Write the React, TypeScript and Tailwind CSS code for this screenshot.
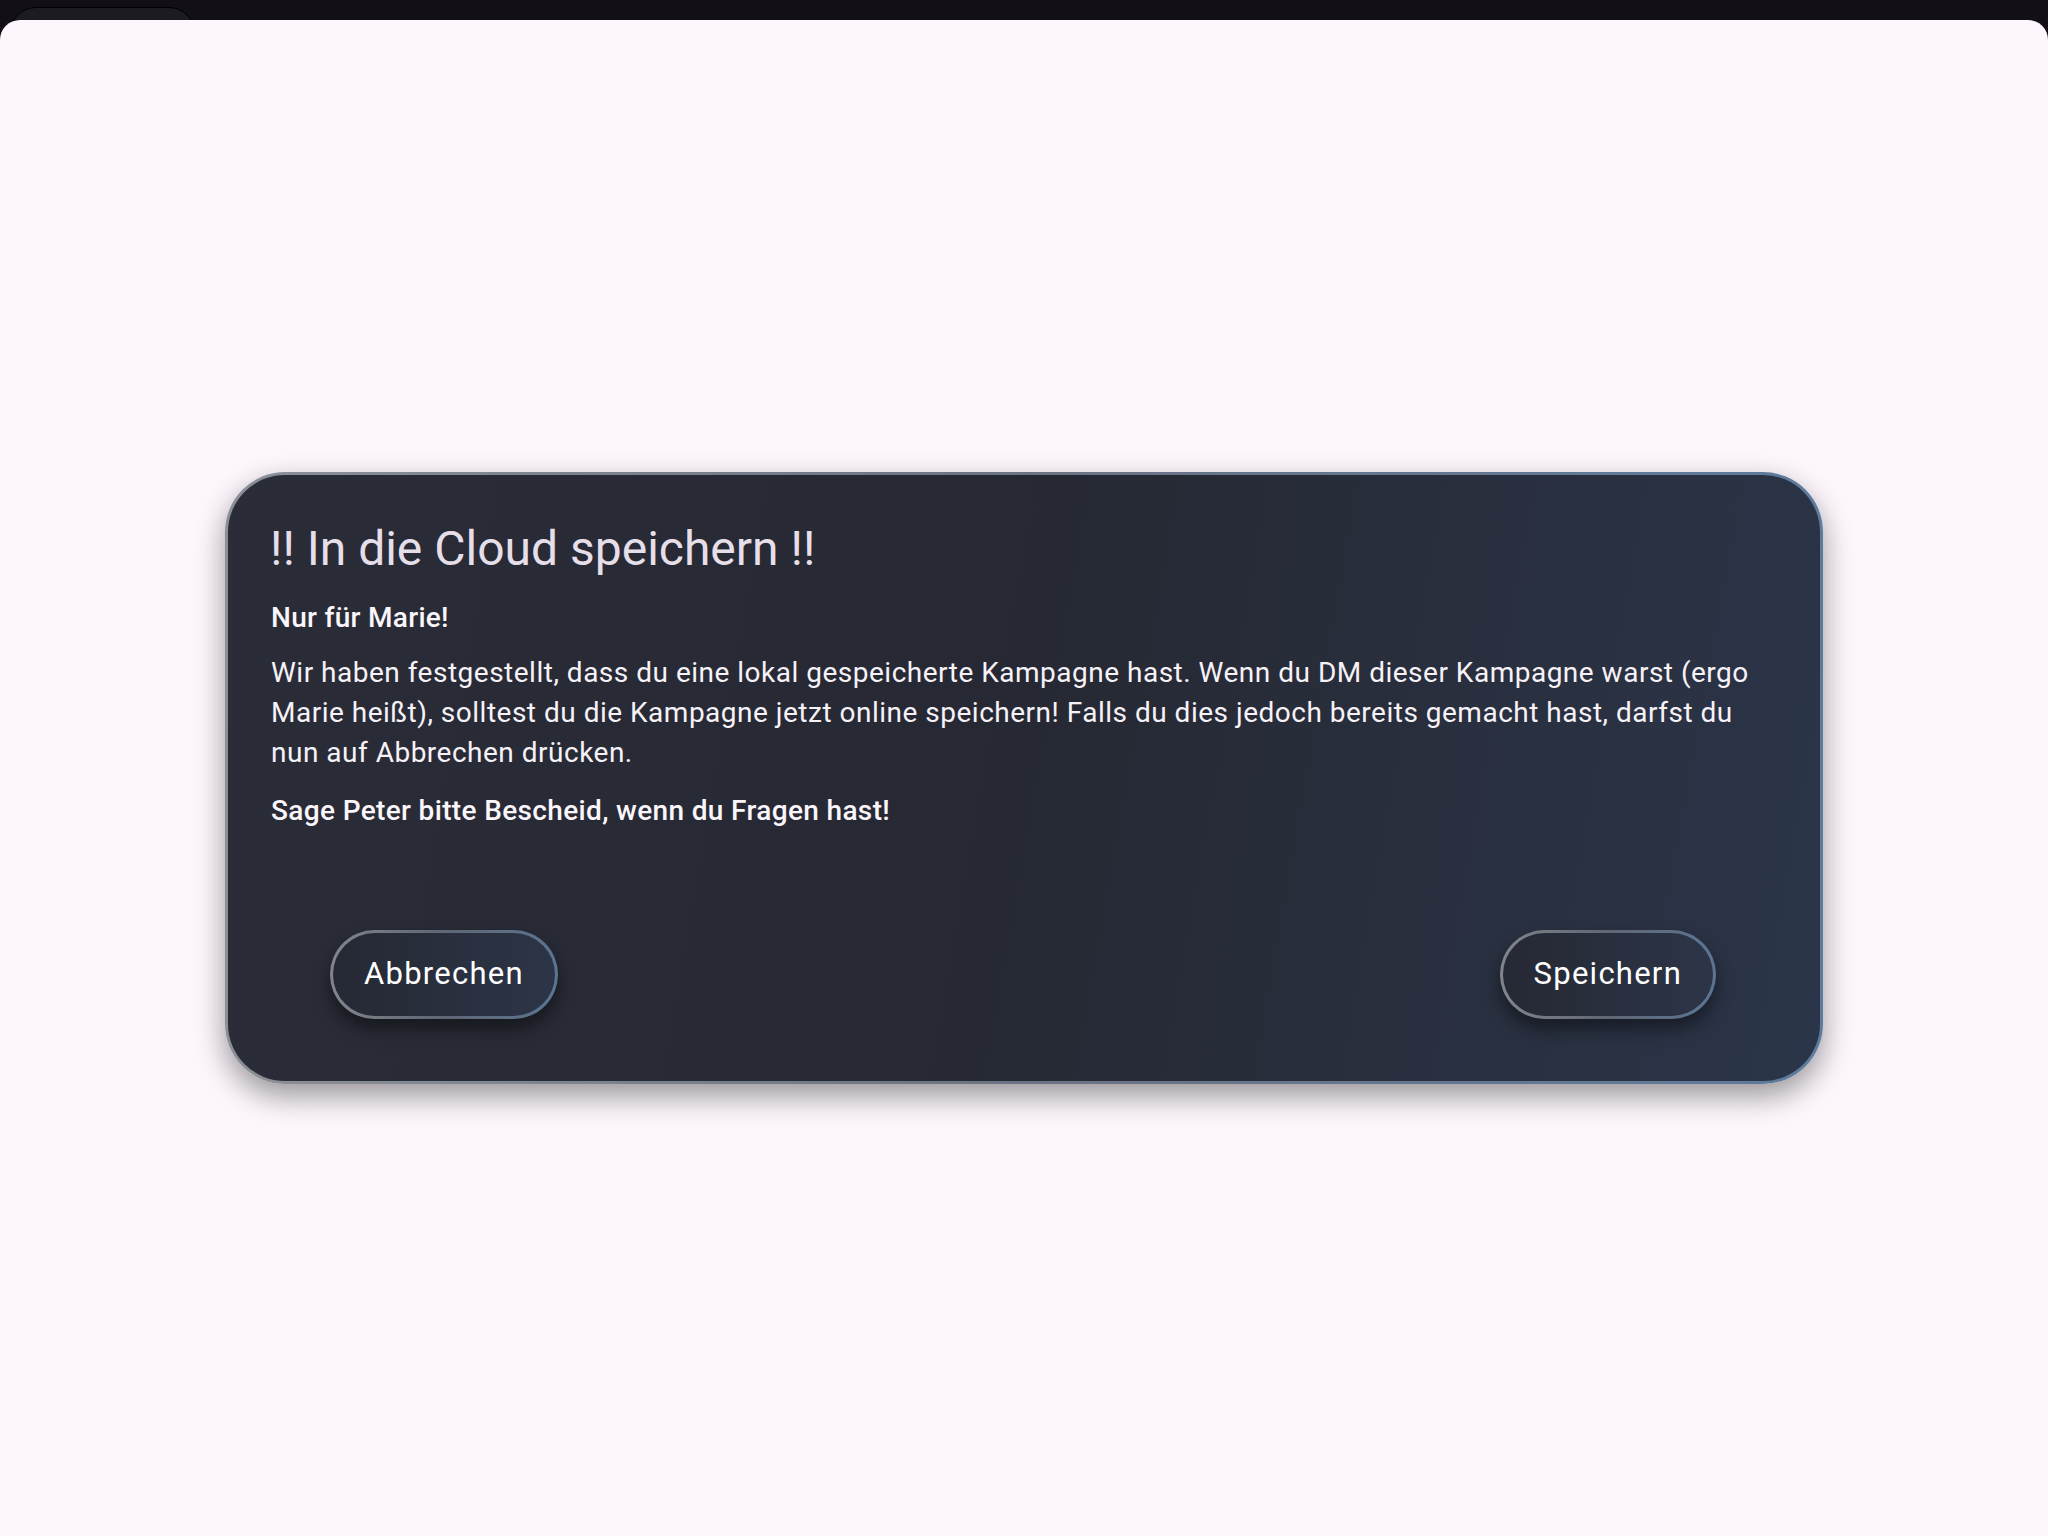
import { ReactNode } from "react";

// Pill button with gradient rim
function PillButton({ children }: { children: ReactNode }) {
  return (
    <button
      type="button"
      className="rounded-full p-[3px] bg-linear-to-r from-[#82858b] via-[#5f6674] to-[#5b7593] shadow-[0_10px_18px_rgba(0,0,0,0.45)]"
    >
      <span className="flex h-[83px] items-center rounded-full bg-linear-to-r from-[#262934] to-[#2c3547] px-[31px] text-[31px] tracking-[1.25px] text-white">
        {children}
      </span>
    </button>
  );
}

export default function App() {
  return (
    <div
      className="flex h-screen w-full flex-col overflow-hidden bg-[#121016]"
      style={{ fontFamily: "Roboto, 'Noto Sans', sans-serif" }}
    >
      {/* top strip with the tab peeking out */}
      <div className="h-[20px] shrink-0 overflow-hidden pl-[10px] pt-[7px]">
        <div className="h-[40px] w-[185px] rounded-t-[26px] border border-black bg-[#1c1b21]" />
      </div>

      {/* sheet */}
      <div className="flex flex-1 items-center justify-center rounded-t-[20px] bg-[#fdf7fd]">
        <div className="w-[1598px] rounded-[60px] bg-linear-to-r from-[#8b9097] via-[#6a7383] to-[#5d7b9c] p-[3px] shadow-[0_12px_30px_rgba(0,0,0,0.4)]">
          <div className="rounded-[57px] bg-linear-100 from-[#2a2d38] via-[#262933] to-[#2b3549] px-[43px] pt-[50px] pb-[62px]">
            <h2 className="-ml-px text-[48px] leading-[48px] text-[#e6dfe9]">
              !! In die Cloud speichern !!
            </h2>
            <p className="mt-[25px] text-[28px] leading-[40px] font-medium tracking-[0.3px] text-[#fbf6fb]">
              Nur für Marie!
            </p>
            <p className="mt-[15px] text-[28px] leading-[40px] tracking-[0.5px] text-[#f7f2f8]">
              Wir haben festgestellt, dass du eine lokal gespeicherte Kampagne
              hast. Wenn du DM dieser Kampagne warst (ergo Marie heißt), solltest
              du die Kampagne jetzt online speichern! Falls du dies jedoch bereits
              gemacht hast, darfst du nun auf Abbrechen drücken.
            </p>
            <p className="mt-[18px] text-[28px] leading-[40px] font-medium tracking-[0.35px] text-[#fbf6fb]">
              Sage Peter bitte Bescheid, wenn du Fragen hast!
            </p>

            <div className="mt-[99px] flex items-center justify-between pl-[59px] pr-[61px]">
              <PillButton>Abbrechen</PillButton>
              <PillButton>Speichern</PillButton>
            </div>
          </div>
        </div>
      </div>
    </div>
  );
}
